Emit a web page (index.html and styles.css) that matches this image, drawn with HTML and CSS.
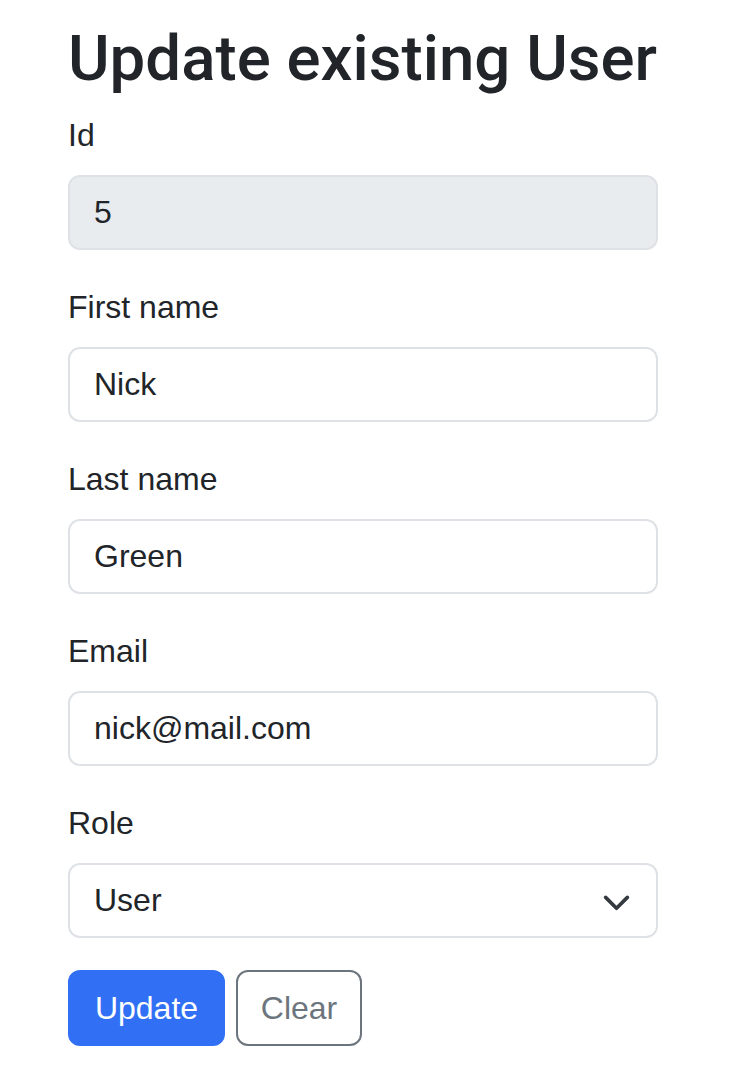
FILE: index.html
```html
<!DOCTYPE html>
<html>
<head>
<meta charset="utf-8">
<link rel="stylesheet" href="styles.css">
</head>
<body>
<div class="container">
  <h1 class="title">Update existing User</h1>
  <form class="form">
    <div class="field">
      <label class="label">Id</label>
      <div class="control disabled">5</div>
    </div>
    <div class="field">
      <label class="label">First name</label>
      <div class="control">Nick</div>
    </div>
    <div class="field">
      <label class="label">Last name</label>
      <div class="control">Green</div>
    </div>
    <div class="field">
      <label class="label">Email</label>
      <div class="control">nick@mail.com</div>
    </div>
    <div class="field field-last">
      <label class="label">Role</label>
      <div class="control select">
        <span>User</span>
        <svg class="chev" width="29" height="22" viewBox="0 0 16 12"><path d="m2 4 6 6 6-6" fill="none" stroke="#343a40" stroke-width="2" stroke-linecap="round" stroke-linejoin="round"/></svg>
      </div>
    </div>
    <div class="actions">
      <button type="button" class="btn primary">Update</button>
      <button type="button" class="btn outline">Clear</button>
    </div>
  </form>
</div>
</body>
</html>
```
FILE: styles.css
```css
* { box-sizing: border-box; }
body {
  margin: 0;
  background: #fff;
  color: #212529;
  font-family: "Liberation Sans", Arial, sans-serif;
}
.container {
  width: 590px;
  margin-left: 68px;
  padding-top: 21px;
}
.title {
  margin: 0 0 14px;
  font-family: Roboto, "Liberation Sans", sans-serif;
  font-size: 63.6px;
  font-weight: 500;
  line-height: 1.2;
  white-space: nowrap;
}
.field { margin-bottom: 33px; }
.field.field-last { margin-bottom: 32px; }
.label {
  display: block;
  font-size: 32px;
  line-height: 48px;
  margin-bottom: 16px;
}
.control {
  height: 75px;
  border: 2px solid #dee2e6;
  border-radius: 12px;
  padding: 0 24px;
  display: flex;
  align-items: center;
  font-size: 32px;
  background: #fff;
}
.control.disabled { background: #e9ecef; }
.control.select { justify-content: space-between; padding-right: 25px; }
.chev { display: block; }
.actions { display: flex; gap: 11px; }
.btn {
  height: 76px;
  padding: 0;
  font-family: "Liberation Sans", Arial, sans-serif;
  font-size: 32px;
  border-radius: 12px;
  border: 2px solid transparent;
  background: none;
  text-align: center;
}
.btn.primary { width: 157px; background: #3170f5; border-color: #3170f5; color: #fff; }
.btn.outline { width: 126px; border-color: #6c757d; color: #6c757d; }
```
